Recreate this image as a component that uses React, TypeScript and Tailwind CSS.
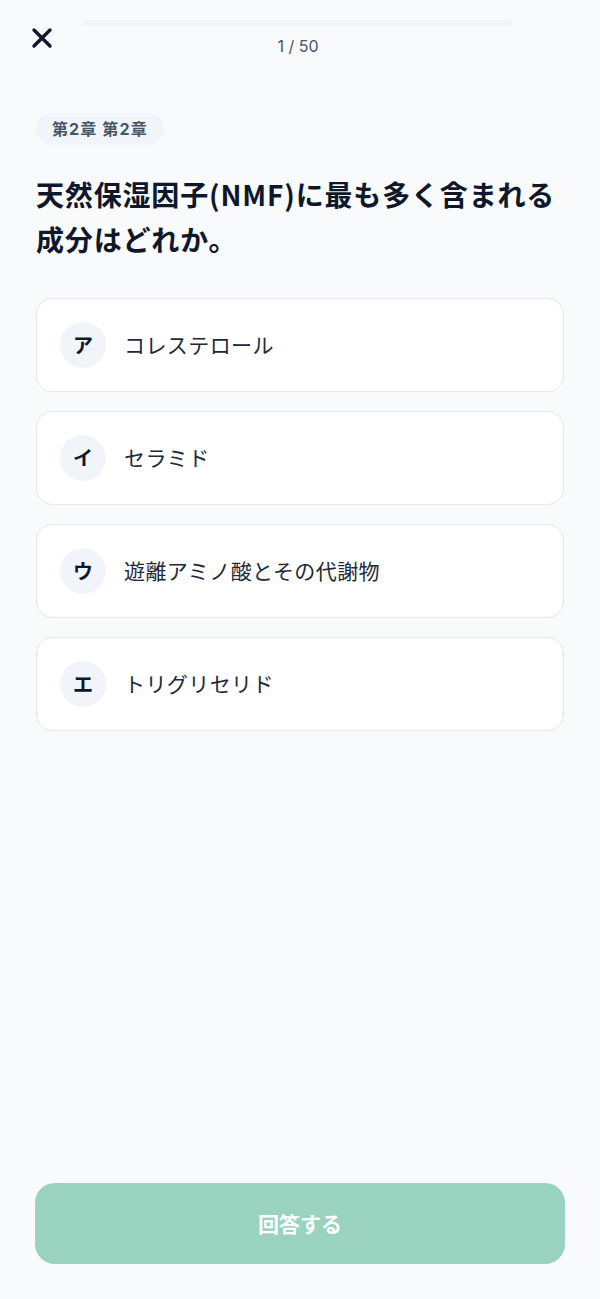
import React, { useState } from 'react';

const choices = [
    { label: 'ア', text: 'コレステロール' },
    { label: 'イ', text: 'セラミド' },
    { label: 'ウ', text: '遊離アミノ酸とその代謝物' },
    { label: 'エ', text: 'トリグリセリド' },
];

const CloseIcon = () => (
    <svg width="22" height="22" viewBox="0 0 22 22" fill="none">
        <path d="M3 3L19 19M19 3L3 19" stroke="#0f172a" strokeWidth="3.4" strokeLinecap="round" />
    </svg>
);

const App: React.FC = () => {
    const [selected, setSelected] = useState<number | null>(null);
    const current = 1;
    const total = 50;

    return (
        <div className="min-h-screen bg-[#f9fafb] flex flex-col font-['Inter','Noto_Sans_CJK_JP',sans-serif]">
            {/* header */}
            <div className="flex items-start pt-[20px] px-[30px]">
                <button className="w-[24px] mt-[7px] flex items-center justify-center">
                    <CloseIcon />
                </button>
                <div className="flex-1 ml-[29px] mr-[57px] flex flex-col items-center">
                    <div className="w-full h-[6px] rounded-full bg-[#f1f5f9] overflow-hidden">
                        <div className="h-full bg-[#99d3bf]" style={{ width: `${(current / total) * 0}%` }} />
                    </div>
                    <p className="mt-[8px] text-[16px] leading-[24px] text-[#475569]">
                        {current} / {total}
                    </p>
                </div>
            </div>

            <div className="px-[36px]">
                <span className="inline-flex items-center h-[32px] mt-[55px] px-[16px] rounded-full bg-[#f1f5f9] text-[16px] font-bold tracking-[0.07em] text-[#475569]">
                    第2章 第2章
                </span>

                <h1 className="mt-[27px] text-[28px] leading-[45px] font-bold tracking-[0.03em] text-[#0f172a] font-['Noto_Sans_CJK_JP',sans-serif]">
                    天然保湿因子(NMF)に最も多く含まれる
                    <br />
                    成分はどれか。
                </h1>

                <div className="mt-[36px] flex flex-col gap-[19px]">
                    {choices.map((c, i) => (
                        <button
                            key={c.label}
                            onClick={() => setSelected(i)}
                            className={`h-[94px] rounded-[16px] border bg-white flex items-center px-[23px] gap-[18px] text-left ${
                                selected === i ? 'border-[#34b38a]' : 'border-[#e5e7eb]'
                            }`}
                        >
                            <span className="shrink-0 w-[46px] h-[46px] rounded-full bg-[#f1f5f9] flex items-center justify-center text-[20px] font-bold text-[#0f172a] font-['Noto_Sans_CJK_JP',sans-serif]">
                                {c.label}
                            </span>
                            <span className="text-[21px] tracking-[0.02em] text-[#1e293b] font-['Noto_Sans_CJK_JP',sans-serif]">{c.text}</span>
                        </button>
                    ))}
                </div>
            </div>

            <div className="mt-auto px-[35px] pb-[35px] pt-6">
                <button className="w-full h-[81px] rounded-[20px] bg-[#99d3bf] text-white text-[21px] font-bold font-['Noto_Sans_CJK_JP',sans-serif]">
                    回答する
                </button>
            </div>
        </div>
    );
};

export default App;
